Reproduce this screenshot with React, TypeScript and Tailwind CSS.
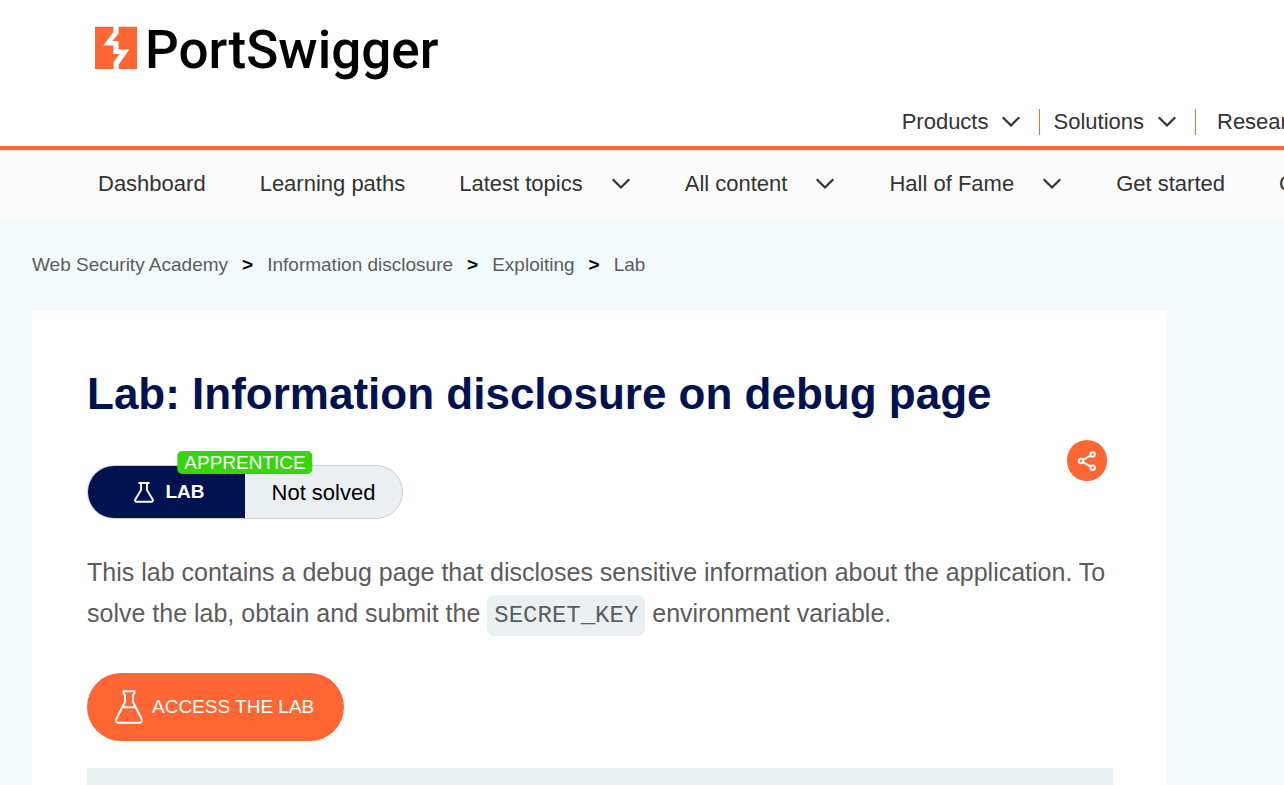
import React from "react";

function Chevron() {
  return (
    <svg viewBox="0 0 20 12" className="h-3 w-5 shrink-0" fill="none" stroke="currentColor" strokeWidth="2.2" strokeLinecap="square" aria-hidden="true">
      <path d="M2.5 2 10 9.5 17.5 2" />
    </svg>
  );
}

function LogoMark() {
  return (
    <svg viewBox="0 0 42 43" className="h-[43px] w-[42px] shrink-0" aria-hidden="true">
      <path fill="#ff6633" d="M0 0.7H18.3V5.9L8.3 19.4H18.3V28H24.5L18.6 36V43H0Z" />
      <path fill="#ff6633" d="M23.6 0.7H42V43H23.8V38.5L34.3 23.6H23.6V15H17.5L23.6 7.6Z" />
    </svg>
  );
}

function SmallFlask() {
  return (
    <svg viewBox="0 0 20 21" className="h-[21px] w-5 shrink-0" fill="none" stroke="currentColor" strokeWidth="1.9" strokeLinejoin="round" aria-hidden="true">
      <path d="M4.5 1H15.5M7 1V8L1.3 17.5Q.4 19.7 2.5 19.7H17.5Q19.6 19.7 18.7 17.5L13 8V1" />
    </svg>
  );
}

function LargeFlask() {
  return (
    <svg viewBox="0 0 28 34" className="h-[34px] w-7 shrink-0" fill="none" stroke="currentColor" strokeWidth="1.9" strokeLinejoin="round" strokeLinecap="round" aria-hidden="true">
      <path d="M8.5 1.2H19.5V3.2L18 5V12L26.4 28.5Q28 32.8 24.5 32.8H3.5Q0 32.8 1.6 28.5L10 12V5L8.5 3.2Z" />
      <path d="M8 17.3H20" />
    </svg>
  );
}

function ShareIcon() {
  return (
    <svg viewBox="0 0 20 20" className="size-5" fill="none" stroke="currentColor" strokeWidth="2" aria-hidden="true">
      <circle cx="4" cy="10" r="2.2" />
      <circle cx="15.6" cy="3.5" r="2.2" />
      <circle cx="15.6" cy="16.8" r="2.2" />
      <path d="M6 8.9 13.6 4.6M6 11.1 13.6 15.7" />
    </svg>
  );
}

const sections = [
  { label: "Dashboard", menu: false },
  { label: "Learning paths", menu: false },
  { label: "Latest topics", menu: true },
  { label: "All content", menu: true },
  { label: "Hall of Fame", menu: true },
  { label: "Get started", menu: false },
  { label: "Get certified", menu: false },
];

const crumbs = ["Web Security Academy", "Information disclosure", "Exploiting", "Lab"];

export default function App() {
  return (
    <div className="flex min-h-screen flex-col overflow-x-hidden bg-[#f2fafc] font-['Liberation_Sans',Arial,sans-serif] text-[#333332]">
      <header className="border-b-4 border-[#ff6633] bg-white pt-[19px]">
        <a href="#" className="ml-[95px] inline-flex items-start gap-[8px] align-top text-black">
          <span className="pt-[7px]"><LogoMark /></span>
          <span className="font-['Roboto',sans-serif] text-[53px] leading-[63px] font-medium">PortSwigger</span>
        </a>
        <nav aria-label="Main" className="mt-[27px] flex h-[37px] justify-end overflow-hidden text-[22px] leading-[26px]">
          <div className="-mr-20 flex h-[26px] shrink-0 items-center">
            <button className="flex items-center gap-[13px] pr-[18px]">Products<Chevron /></button>
            <button className="flex h-full items-center gap-[13px] border-l border-[#ff6633] pr-[18px] pl-[13px]">Solutions<Chevron /></button>
            <a href="#" className="flex h-full w-[169px] items-center border-l border-[#ff6633] pl-[21px]">Research</a>
          </div>
        </nav>
      </header>

      <nav aria-label="Academy" className="flex h-[68px] shrink-0 items-center gap-[54px] overflow-hidden border-t border-[#ebebeb] bg-[#fbfbfb] pb-[2px] pl-[98px] text-[22px] leading-[26px] whitespace-nowrap">
        {sections.map((s) =>
          s.menu ? (
            <button key={s.label} className="flex shrink-0 items-center gap-7">{s.label}<Chevron /></button>
          ) : (
            <a key={s.label} href="#" className="shrink-0">{s.label}</a>
          ),
        )}
      </nav>

      <main className="flex grow flex-col pl-8">
        <ol className="flex h-[93px] items-center gap-[14px] text-[19px] leading-6 text-[#5c5c5b]">
          {crumbs.map((c, i) => (
            <li key={c} className="flex items-center gap-[14px]">
              {i > 0 && <span className="font-bold text-black">&gt;</span>}
              <a href="#">{c}</a>
            </li>
          ))}
        </ol>

        <article className="mr-[117px] flex grow flex-col bg-white pt-[57px] pr-[54px] pl-[55px]">
          <h1 className="text-[44px] leading-[52px] font-bold text-[#00124f]">Lab: Information disclosure on debug page</h1>

          <div className="mt-5 flex items-start justify-between pr-[6px]">
            <div className="relative mt-[25px] flex h-[54px] w-[316px] rounded-full border border-[#cdd0d1] bg-[#eaeff2]">
              <div className="flex w-1/2 items-center justify-center gap-[11px] rounded-l-full bg-[#00124f] pl-[6px] text-[19px] font-bold text-white">
                <SmallFlask />LAB
              </div>
              <div className="flex w-1/2 items-center justify-center text-[22px] text-black">Not solved</div>
              <span className="absolute -top-[15px] left-1/2 -translate-x-1/2 rounded-[5px] bg-[#37d60c] px-[7px] text-[19px] leading-[23px] text-white">APPRENTICE</span>
            </div>
            <button aria-label="Share" className="flex h-[41px] w-10 items-center justify-center rounded-full bg-[#ff6633] text-white">
              <ShareIcon />
            </button>
          </div>

          <p className="mt-[33px] text-[25px] leading-[41px] text-[#5c5c5b]">
            This lab contains a debug page that discloses sensitive information about the application. To solve the lab, obtain and submit the{" "}
            <code className="rounded-lg bg-[#eaeff2] px-[7px] py-[7px] font-['Liberation_Mono','Courier_New',monospace] text-[24px]">SECRET_KEY</code>{" "}
            environment variable.
          </p>

          <a href="#" className="mt-[37px] flex h-[68px] items-center gap-[9px] self-start rounded-full bg-[#ff6633] pr-[30px] pl-7 text-[19px] text-white">
            <LargeFlask />ACCESS THE LAB
          </a>

          <div className="mt-[27px] min-h-4 grow bg-[#eaeff2]" />
        </article>
      </main>
    </div>
  );
}
